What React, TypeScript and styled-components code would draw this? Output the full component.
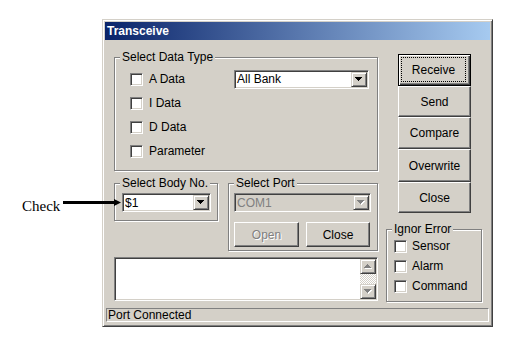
import React from 'react';
import styled, { createGlobalStyle } from 'styled-components';

const face = '#d4d0c8';

const GlobalStyle = createGlobalStyle`
  html, body {
    margin: 0;
    padding: 0;
    background: #fff;
  }
  body {
    font-family: 'Liberation Sans', Arial, sans-serif;
    font-size: 12px;
    color: #000;
  }
`;

// pixel triangles, drawn as rows
const DOWN = 'M0 0h7v1H0zM1 1h5v1H1zM2 2h3v1H2zM3 3h1v1H3z';
const UP = 'M3 0h1v1H3zM2 1h3v1H2zM1 2h5v1H1zM0 3h7v1H0z';

const Arrow: React.FC<{ d: string; disabled?: boolean }> = ({ d, disabled }) => (
  <svg width="8" height="5" viewBox="0 0 8 5" shapeRendering="crispEdges">
    {disabled && <path d={d} fill="#fff" transform="translate(1 1)" />}
    <path d={d} fill={disabled ? '#808080' : '#000'} />
  </svg>
);

const CheckBox: React.FC<{ label: string; $h: number; $gap: number }> = ({ label, $h, $gap }) => (
  <CheckRow $h={$h} $gap={$gap}>
    <Box />
    <span>{label}</span>
  </CheckRow>
);

const ComboBox: React.FC<{ value: string; disabled?: boolean }> = ({ value, disabled }) => (
  <Combo $disabled={disabled}>
    <ComboText $disabled={disabled}>{value}</ComboText>
    <DropButton>
      <Arrow d={DOWN} disabled={disabled} />
    </DropButton>
  </Combo>
);

const stackHeights = [32, 31, 32, 33, 31];

export default function App() {
  return (
    <>
      <GlobalStyle />
      <Page>
        <Annotation>
          <AnnotationText>Check</AnnotationText>
          <svg width="58" height="9" viewBox="0 0 58 9">
            <rect x="0" y="3" width="53" height="3" fill="#000" />
            <polygon points="51,1 58,4.5 51,8" fill="#000" />
          </svg>
        </Annotation>

        <Window>
          <TitleBar>Transceive</TitleBar>
          <Main>
            <LeftColumn>
              <Group $w={264}>
                <Legend>Select Data Type</Legend>
                <DataTypeGrid>
                  <CheckBox label="A Data" $h={24} $gap={6} />
                  <ComboBox value="All Bank" />
                  <CheckBox label="I Data" $h={24} $gap={6} />
                  <span />
                  <CheckBox label="D Data" $h={24} $gap={6} />
                  <span />
                  <CheckBox label="Parameter" $h={24} $gap={6} />
                </DataTypeGrid>
              </Group>

              <GroupRow>
                <Group $w={104}>
                  <Legend>Select Body No.</Legend>
                  <GroupBody $pad="3px 6px 8px 7px">
                    <ComboBox value="$1" />
                  </GroupBody>
                </Group>
                <Group $w={150}>
                  <Legend>Select Port</Legend>
                  <GroupBody $pad="3px 6px 3px 5px">
                    <ComboBox value="COM1" disabled />
                    <PortButtons>
                      <PushButton $w={65} $h={25} disabled>
                        Open
                      </PushButton>
                      <PushButton $w={64} $h={25}>
                        Close
                      </PushButton>
                    </PortButtons>
                  </GroupBody>
                </Group>
              </GroupRow>

              <LogBox>
                <LogText />
                <ScrollBar>
                  <ScrollButton $h={15}>
                    <Arrow d={UP} disabled />
                  </ScrollButton>
                  <ScrollTrack />
                  <ScrollButton $h={15}>
                    <Arrow d={DOWN} disabled />
                  </ScrollButton>
                </ScrollBar>
              </LogBox>
            </LeftColumn>

            <RightColumn>
              <ButtonStack>
                <DefaultButton $h={stackHeights[0]}>
                  <FocusRect>Receive</FocusRect>
                </DefaultButton>
                <PushButton $h={stackHeights[1]}>Send</PushButton>
                <PushButton $h={stackHeights[2]}>Compare</PushButton>
                <PushButton $h={stackHeights[3]}>Overwrite</PushButton>
                <PushButton $h={stackHeights[4]}>Close</PushButton>
              </ButtonStack>

              <Group $w={96} $mt={16}>
                <Legend>Ignor Error</Legend>
                <GroupBody $pad="0 4px 5px 7px">
                  <CheckBox label="Sensor" $h={20} $gap={5} />
                  <CheckBox label="Alarm" $h={20} $gap={5} />
                  <CheckBox label="Command" $h={20} $gap={5} />
                </GroupBody>
              </Group>
            </RightColumn>
          </Main>
          <StatusBar>Port Connected</StatusBar>
        </Window>
      </Page>
    </>
  );
}

// --- Styled Components (Windows classic dialog) ---

const Page = styled.div`
  position: relative;
  width: 506px;
  height: 349px;
  box-sizing: border-box;
  padding: 19px 0 0 102px;
`;

const Annotation = styled.div`
  position: absolute;
  left: 22px;
  top: 196px;
  display: flex;
  align-items: flex-start;

  svg {
    margin-top: 2px;
  }
`;

const AnnotationText = styled.div`
  width: 41px;
  padding-top: 3px;
  font-family: 'Liberation Serif', 'Times New Roman', serif;
  font-size: 15px;
  line-height: 15px;
`;

const Window = styled.div`
  width: 391px;
  height: 308px;
  box-sizing: border-box;
  padding: 2px;
  background: ${face};
  border: 1px solid;
  border-color: ${face} #404040 #404040 ${face};
  box-shadow: inset 1px 1px 0 #fff, inset -1px -1px 0 #808080;
  display: flex;
  flex-direction: column;
`;

const TitleBar = styled.div`
  height: 18px;
  line-height: 18px;
  padding-left: 2px;
  background: linear-gradient(90deg, #0a246a, #a6caf0);
  color: #fff;
  font-weight: bold;
  font-size: 12px;
`;

const Main = styled.div`
  flex: 1;
  min-height: 0;
  display: flex;
  gap: 8px;
  padding: 14px 8px 0 9px;
`;

const LeftColumn = styled.div`
  width: 264px;
  display: flex;
  flex-direction: column;
  padding-top: 3px;
`;

const RightColumn = styled.div`
  width: 96px;
  display: flex;
  flex-direction: column;
`;

const Group = styled.div<{ $w: number; $mt?: number }>`
  width: ${(p) => p.$w}px;
  box-sizing: border-box;
  margin-top: ${(p) => p.$mt ?? 0}px;
  border: 1px solid #808080;
  box-shadow: inset 1px 1px 0 #fff, 1px 1px 0 #fff;
  display: flex;
  flex-direction: column;
`;

const Legend = styled.div`
  align-self: flex-start;
  margin: -8px 0 0 5px;
  padding: 0 2px;
  line-height: 14px;
  background: ${face};
  white-space: nowrap;
`;

const GroupBody = styled.div<{ $pad: string }>`
  display: flex;
  flex-direction: column;
  padding: ${(p) => p.$pad};
`;

const DataTypeGrid = styled.div`
  display: grid;
  grid-template-columns: 104px 135px;
  grid-auto-rows: 24px;
  align-items: center;
  padding: 3px 0 7px 15px;
`;

const GroupRow = styled.div`
  display: flex;
  align-items: flex-start;
  gap: 10px;
  margin-top: 12px;
`;

const PortButtons = styled.div`
  display: flex;
  gap: 7px;
  margin-top: 10px;
`;

const CheckRow = styled.div<{ $h: number; $gap: number }>`
  display: flex;
  align-items: center;
  gap: ${(p) => p.$gap}px;
  height: ${(p) => p.$h}px;
  white-space: nowrap;
`;

const Box = styled.span`
  width: 13px;
  height: 13px;
  flex: none;
  box-sizing: border-box;
  background: #fff;
  border: 1px solid;
  border-color: #808080 #fff #fff #808080;
  box-shadow: inset 1px 1px 0 #404040, inset -1px -1px 0 ${face};
`;

const Sunken = styled.div`
  box-sizing: border-box;
  border: 1px solid;
  border-color: #808080 #fff #fff #808080;
  box-shadow: inset 1px 1px 0 #404040, inset -1px -1px 0 ${face};
  padding: 1px;
`;

const Combo = styled(Sunken)<{ $disabled?: boolean }>`
  display: flex;
  height: 19px;
  background: ${(p) => (p.$disabled ? face : '#fff')};
`;

const ComboText = styled.div<{ $disabled?: boolean }>`
  flex: 1;
  display: flex;
  align-items: center;
  padding-left: 1px;
  color: ${(p) => (p.$disabled ? '#808080' : '#000')};
  white-space: nowrap;
  overflow: hidden;
`;

const Raised = styled.div`
  box-sizing: border-box;
  display: flex;
  align-items: center;
  justify-content: center;
  background: ${face};
  border: 1px solid;
  border-color: ${face} #404040 #404040 ${face};
  box-shadow: inset 1px 1px 0 #fff, inset -1px -1px 0 #808080;
`;

const DropButton = styled(Raised)`
  width: 16px;
  flex: none;
`;

const PushButton = styled.button<{ $w?: number; $h: number }>`
  display: flex;
  align-items: center;
  justify-content: center;
  width: ${(p) => (p.$w ? `${p.$w}px` : '100%')};
  height: ${(p) => p.$h}px;
  box-sizing: border-box;
  margin: 0;
  padding: 0;
  background: ${face};
  font-family: inherit;
  font-size: 12px;
  color: #000;
  border: 1px solid;
  border-color: #fff #404040 #404040 #fff;
  box-shadow: inset -1px -1px 0 #808080;

  &:disabled {
    color: #808080;
    text-shadow: 1px 1px 0 #fff;
  }
`;

const DefaultButton = styled(PushButton)`
  align-items: stretch;
  border-color: #000;
  box-shadow: inset 1px 1px 0 #fff, inset -1px -1px 0 #404040, inset -2px -2px 0 #808080;
`;

const FocusRect = styled.span`
  flex: 1;
  display: flex;
  align-items: center;
  justify-content: center;
  margin: 2px 4px 3px 2px;
  border: 1px dotted #000;
`;

const ButtonStack = styled.div`
  width: 73px;
  margin-left: 12px;
  display: flex;
  flex-direction: column;
`;

const LogBox = styled(Sunken)`
  display: flex;
  width: 264px;
  height: 44px;
  margin-top: 6px;
  background: #fff;
`;

const LogText = styled.div`
  flex: 1;
`;

const ScrollBar = styled.div`
  width: 16px;
  display: flex;
  flex-direction: column;
`;

const ScrollButton = styled(Raised)<{ $h: number }>`
  height: ${(p) => p.$h}px;
`;

const ScrollTrack = styled.div`
  flex: 1;
  background: repeating-conic-gradient(#fff 0 25%, ${face} 0 50%) 0 0 / 2px 2px;
`;

const StatusBar = styled.div`
  height: 14px;
  box-sizing: border-box;
  margin: 0 1px 2px;
  padding-left: 1px;
  line-height: 12px;
  border: 1px solid;
  border-color: #808080 #fff #fff #808080;
  white-space: nowrap;
`;
